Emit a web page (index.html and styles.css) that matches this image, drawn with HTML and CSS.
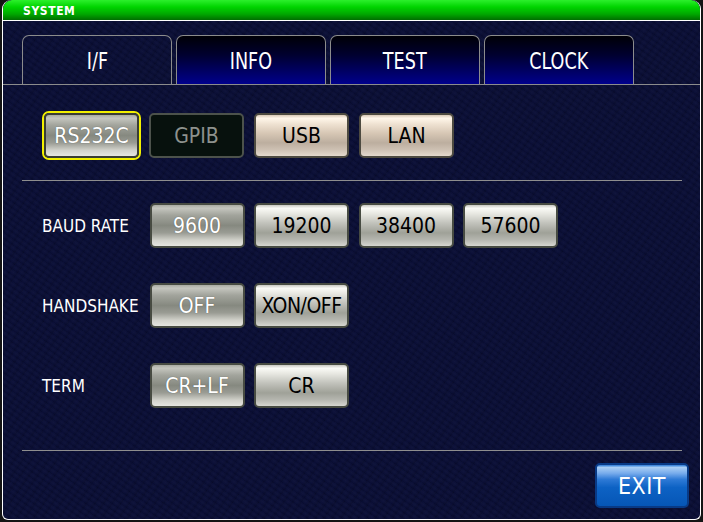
FILE: index.html
```html
<!DOCTYPE html>
<html>
<head>
<meta charset="utf-8">
<link rel="stylesheet" href="styles.css">
</head>
<body>
<div class="window">
  <div class="titlebar"><span class="title">SYSTEM</span></div>
  <div class="tabs">
    <div class="tab active"><span class="tab-text">I/F</span></div>
    <div class="tab"><span class="tab-text">INFO</span></div>
    <div class="tab"><span class="tab-text">TEST</span></div>
    <div class="tab"><span class="tab-text">CLOCK</span></div>
  </div>
  <div class="content">
    <div class="iface-row">
      <div class="btn sel focus">RS232C</div>
      <div class="btn disabled">GPIB</div>
      <div class="btn beige">USB</div>
      <div class="btn beige">LAN</div>
    </div>
    <div class="sep"></div>
    <div class="settings">
      <div class="label">BAUD RATE</div>
      <div class="btn sel">9600</div>
      <div class="btn">19200</div>
      <div class="btn">38400</div>
      <div class="btn">57600</div>

      <div class="label">HANDSHAKE</div>
      <div class="btn sel">OFF</div>
      <div class="btn tight">XON/OFF</div>
      <div class="empty"></div>
      <div class="empty"></div>

      <div class="label">TERM</div>
      <div class="btn sel">CR+LF</div>
      <div class="btn">CR</div>
      <div class="empty"></div>
      <div class="empty"></div>
    </div>
    <div class="sep sep2"></div>
    <div class="footer">
      <div class="btn exit">EXIT</div>
    </div>
  </div>
</div>
</body>
</html>
```

FILE: styles.css
```css
html, body {
  margin: 0;
  padding: 0;
}
body {
  background: #141414;
  width: 703px;
  height: 522px;
  overflow: hidden;
  font-family: "DejaVu Sans Condensed", "DejaVu Sans", sans-serif;
  font-stretch: condensed;
}
.window {
  margin-left: 2px;
  width: 699px;
  height: 520px;
  box-sizing: border-box;
  border: 1px solid #ffffff;
  border-top: 0;
  border-radius: 9px 9px 6px 6px;
  overflow: hidden;
  background-color: #0a0e34;
  background-image:
    repeating-linear-gradient(35deg, rgba(0,0,0,0.14) 0px, rgba(0,0,0,0) 1px, rgba(255,255,255,0.02) 3px, rgba(0,0,0,0) 5px),
    repeating-linear-gradient(-55deg, rgba(0,0,0,0.10) 0px, rgba(0,0,0,0) 2px, rgba(40,50,120,0.06) 4px, rgba(0,0,0,0) 7px);
}
.titlebar {
  height: 20px;
  border-bottom: 1px solid #ffffff;
  background: linear-gradient(to bottom, #2cf02c 0%, #00d400 35%, #00a800 70%, #006e00 100%);
  border-radius: 9px 9px 0 0;
  box-sizing: content-box;
  padding-left: 20px;
  display: flex;
  align-items: center;
}
.title {
  color: #ffffff;
  font-weight: bold;
  font-size: 12px;
  letter-spacing: 0.6px;
  line-height: 12px;
  padding-top: 1px;
}
.tabs {
  display: flex;
  gap: 4px;
  padding: 14px 0 0 19px;
  border-bottom: 1px solid #8c8c8c;
  height: 49px;
}
.tab {
  width: 150px;
  height: 49px;
  box-sizing: border-box;
  border: 1px solid #8c8c8c;
  border-bottom: 0;
  border-radius: 7px 7px 0 0;
  background: linear-gradient(to bottom, #000006 0%, #000030 40%, #00008c 100%);
  color: #ffffff;
  font-size: 23px;
  display: flex;
  align-items: center;
  justify-content: center;
  padding-top: 1px;
}
.tab-text {
  display: inline-block;
  transform: scaleX(0.85);
}
.tab.active {
  height: 50px;
  margin-bottom: -1px;
  background: transparent;
}
.content {
  padding: 0 18px 0 19px;
}
.iface-row {
  display: flex;
  gap: 10px;
  padding-left: 22px;
  margin-top: 28px;
}
.btn {
  width: 95px;
  height: 45px;
  box-sizing: border-box;
  border: 2px solid #474b42;
  border-radius: 5px;
  display: flex;
  align-items: center;
  justify-content: center;
  font-size: 21px;
  color: #000000;
  background: linear-gradient(to bottom, #c8c8c2 0%, #fafaf6 8%, #e6e6e0 22%, #c0c1ba 45%, #9fa198 68%, #b4b5ae 84%, #d6d6d0 100%);
  padding-top: 1px;
}
.btn.sel {
  color: #ffffff;
  background: linear-gradient(to bottom, #a9aba3 0%, #c4c5be 8%, #a2a49c 25%, #868980 50%, #9a9c94 68%, #d2d2cb 86%, #e6e6e0 100%);
  text-shadow: 0 0 1px rgba(0,0,0,0.5);
}
.btn.focus {
  box-shadow: 0 0 0 2px #f2f000;
  border-color: #3a3d34;
}
.btn.disabled {
  background: #07110d;
  border-color: #4c524b;
  color: #8e928d;
}
.btn.beige {
  background: linear-gradient(to bottom, #d8c8b6 0%, #fff6ea 8%, #efe2d2 22%, #d6c6b4 45%, #bcae9f 68%, #cdc0b2 84%, #e4d9cd 100%);
  border-color: #4d4a40;
}
.btn.tight {
  letter-spacing: -0.5px;
}
.sep {
  height: 1px;
  background: #8e8e8e;
  margin-top: 22px;
}
.settings {
  display: grid;
  grid-template-columns: 96px 95px 95px 95px 95px;
  column-gap: 9.5px;
  row-gap: 35px;
  grid-auto-rows: 45px;
  padding-left: 22px;
  margin-top: 22px;
}
.label {
  color: #ffffff;
  font-size: 17px;
  display: flex;
  align-items: center;
  margin-left: -2px;
  white-space: nowrap;
  padding-top: 1px;
}
.sep2 {
  margin-top: 42px;
}
.footer {
  display: flex;
  justify-content: flex-end;
  margin-top: 12px;
  margin-right: -7px;
}
.btn.exit {
  width: 94px;
  color: #ffffff;
  font-size: 23px;
  letter-spacing: 0.5px;
  border-color: #083a86;
  background: linear-gradient(to bottom, #2a78d4 0%, #a8cdf4 6%, #78acec 20%, #2e7ad6 35%, #0d62c4 55%, #0656b6 100%);
}
```
